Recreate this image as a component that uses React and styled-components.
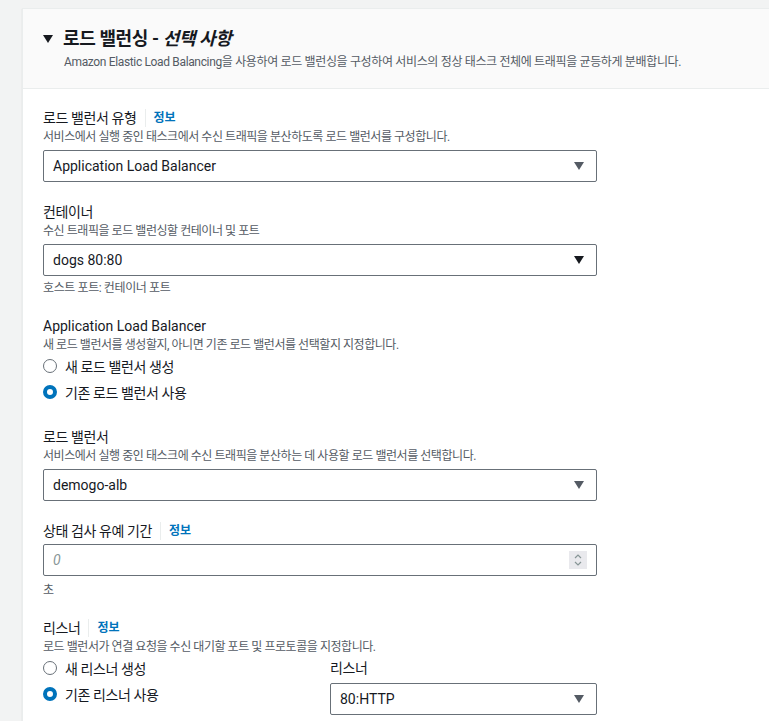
import React from 'react';
import styled, { createGlobalStyle } from 'styled-components';

const GlobalStyle = createGlobalStyle`
  html, body {
    margin: 0;
    padding: 0;
    background: #f2f3f3;
    font-family: Roboto, "Noto Sans CJK KR", sans-serif;
    color: #16191f;
  }
`;

const Page = styled.div`
  padding: 8px 0 0 22px;
  height: 721px;
  overflow: hidden;
  box-sizing: border-box;
`;

const Card = styled.div`
  width: 780px;
  background: #fff;
  border: 1px solid #eaeded;
  border-right: none;
  box-shadow: 0 1px 1px rgba(0, 28, 36, 0.15);
`;

const Header = styled.div`
  background: #fafafa;
  border-bottom: 1px solid #eaeded;
  padding: 19px 20px 18px 20px;
`;

const TitleRow = styled.div`
  display: flex;
  align-items: center;
  gap: 10px;
`;

const Caret = styled.span`
  width: 0;
  height: 0;
  border-left: 5px solid transparent;
  border-right: 5px solid transparent;
  border-top: 8px solid #16191f;
`;

const Title = styled.h2`
  margin: 0;
  font-size: 18px;
  line-height: 22px;
  font-weight: 700;
  letter-spacing: -0.4px;
  em {
    font-style: italic;
  }
`;

const HeaderDesc = styled.div`
  margin: 4px 0 0 21px;
  font-size: 12px;
  line-height: 16px;
  color: #545b64;
  letter-spacing: -0.35px;
`;

const Body = styled.div`
  padding: 19px 20px 0 20px;
  width: 554px;
`;

const Field = styled.div`
  padding-bottom: ${(p) => p.$extra || 0}px;
  margin-bottom: 20px;
`;

const Label = styled.div`
  display: flex;
  align-items: center;
  font-size: 14px;
  line-height: 20px;
  letter-spacing: ${(p) => (p.$latin ? 0 : -0.4)}px;
  margin-top: ${(p) => p.$top || 0}px;
`;

const Info = styled.span`
  margin-left: 8px;
  padding-left: 8px;
  border-left: 1px solid #eaeded;
  font-size: 12px;
  font-weight: 700;
  line-height: 18px;
  letter-spacing: 0;
  color: #0073bb;
`;

const Desc = styled.div`
  font-size: 12px;
  line-height: 16px;
  color: #545b64;
  letter-spacing: -0.45px;
  margin-top: 1px;
`;

const Box = styled.div`
  display: flex;
  align-items: center;
  justify-content: space-between;
  height: 32px;
  box-sizing: border-box;
  margin-top: ${(p) => p.$top ?? 5}px;
  padding: 0 12px 0 9px;
  border: 1px solid #687078;
  border-radius: 2px;
  background: #fff;
  font-size: 14px;
  color: #16191f;
`;

const Arrow = styled.span`
  width: 0;
  height: 0;
  border-left: 5px solid transparent;
  border-right: 5px solid transparent;
  border-top: 8px solid ${(p) => p.$color || '#545b64'};
`;

const Placeholder = styled.span`
  font-style: italic;
  color: #879596;
`;

const Spinner = styled.span`
  width: 18px;
  height: 18px;
  margin-right: -3px;
  background: #e9e9ed;
  display: flex;
  align-items: center;
  justify-content: center;
`;

const Hint = styled.div`
  font-size: 12px;
  line-height: 16px;
  color: #545b64;
  letter-spacing: -0.4px;
  margin-top: ${(p) => p.$top || 4}px;
`;

const Radios = styled.div`
  display: flex;
  flex-direction: column;
  gap: 4px;
  margin-top: 2px;
`;

const RadioRow = styled.label`
  display: flex;
  align-items: center;
  gap: 8px;
  height: 22px;
  font-size: 14px;
  letter-spacing: -0.4px;
`;

const Circle = styled.span`
  width: 14px;
  height: 14px;
  box-sizing: border-box;
  border-radius: 50%;
  border: ${(p) => (p.$on ? '4px solid #0073bb' : '1.5px solid #687078')};
  background: #fff;
`;

const Split = styled.div`
  display: grid;
  grid-template-columns: 1fr 1fr;
  column-gap: 20px;
`;

const Radio = ({ on, children }) => (
  <RadioRow>
    <Circle $on={on} />
    {children}
  </RadioRow>
);

const Select = ({ value, arrow, top }) => (
  <Box $top={top}>
    <span>{value}</span>
    <Arrow $color={arrow} />
  </Box>
);

export default function App() {
  return (
    <>
      <GlobalStyle />
      <Page>
        <Card>
          <Header>
            <TitleRow>
              <Caret />
              <Title>
                로드 밸런싱 - <em>선택 사항</em>
              </Title>
            </TitleRow>
            <HeaderDesc>
              Amazon Elastic Load Balancing을 사용하여 로드 밸런싱을 구성하여 서비스의 정상 태스크 전체에 트래픽을 균등하게 분배합니다.
            </HeaderDesc>
          </Header>
          <Body>
            <Field>
              <Label>
                로드 밸런서 유형<Info>정보</Info>
              </Label>
              <Desc>서비스에서 실행 중인 태스크에서 수신 트래픽을 분산하도록 로드 밸런서를 구성합니다.</Desc>
              <Select value="Application Load Balancer" arrow="#545b64" />
            </Field>
            <Field>
              <Label>컨테이너</Label>
              <Desc>수신 트래픽을 로드 밸런싱할 컨테이너 및 포트</Desc>
              <Select value="dogs 80:80" arrow="#16191f" />
              <Hint>호스트 포트: 컨테이너 포트</Hint>
            </Field>
            <Field $extra={4}>
              <Label $latin>Application Load Balancer</Label>
              <Desc>새 로드 밸런서를 생성할지, 아니면 기존 로드 밸런서를 선택할지 지정합니다.</Desc>
              <Radios>
                <Radio>새 로드 밸런서 생성</Radio>
                <Radio on>기존 로드 밸런서 사용</Radio>
              </Radios>
            </Field>
            <Field>
              <Label>로드 밸런서</Label>
              <Desc>서비스에서 실행 중인 태스크에 수신 트래픽을 분산하는 데 사용할 로드 밸런서를 선택합니다.</Desc>
              <Select value="demogo-alb" arrow="#545b64" />
            </Field>
            <Field>
              <Label>
                상태 검사 유예 기간<Info>정보</Info>
              </Label>
              <Box $top={3}>
                <Placeholder>0</Placeholder>
                <Spinner>
                  <svg width="10" height="14" viewBox="0 0 10 14" fill="none" stroke="#879596" strokeWidth="1.2">
                    <path d="M2 5 L5 2 L8 5" />
                    <path d="M2 9 L5 12 L8 9" />
                  </svg>
                </Spinner>
              </Box>
              <Hint $top={6}>초</Hint>
            </Field>
            <Field>
              <Label>
                리스너<Info>정보</Info>
              </Label>
              <Desc>로드 밸런서가 연결 요청을 수신 대기할 포트 및 프로토콜을 지정합니다.</Desc>
              <Split>
                <Radios>
                  <Radio>새 리스너 생성</Radio>
                  <Radio on>기존 리스너 사용</Radio>
                </Radios>
                <div>
                  <Label $top={3}>리스너</Label>
                  <Select value="80:HTTP" arrow="#545b64" top={5} />
                </div>
              </Split>
            </Field>
          </Body>
        </Card>
      </Page>
    </>
  );
}
